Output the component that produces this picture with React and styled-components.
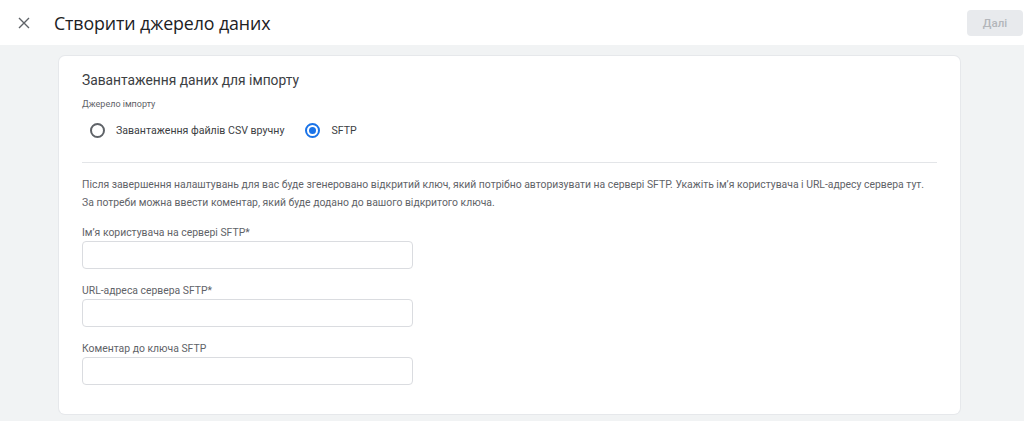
import React from 'react';
import styled, { createGlobalStyle } from 'styled-components';

const GlobalStyle = createGlobalStyle`
    html, body {
        margin: 0;
        padding: 0;
        background: #f1f3f4;
        font-family: Roboto, 'Liberation Sans', sans-serif;
    }
`

const Page = styled.div`
    min-height: 421px;
    display: flex;
    flex-direction: column;
`

const Header = styled.header`
    height: 45px;
    background: #fff;
    display: flex;
    align-items: center;
    padding: 0 1px 0 12px;
    box-sizing: border-box;
`

const CloseButton = styled.button`
    width: 24px;
    height: 24px;
    border: none;
    background: none;
    padding: 0;
    display: flex;
    align-items: center;
    justify-content: center;
    color: #5f6368;
    margin-right: 18px;
`

const Title = styled.h1`
    flex: 1;
    margin: 0;
    font-family: 'Open Sans', Roboto, sans-serif;
    font-weight: 400;
    font-size: 17.8px;
    color: #202124;
    letter-spacing: -0.1px;
`

const NextButton = styled.button`
    width: 56px;
    height: 26px;
    border: none;
    border-radius: 4px;
    background: #e8eaed;
    color: #b3b6ba;
    font-family: Roboto, sans-serif;
    font-weight: 500;
    font-size: 11.5px;
    margin-top: 1px;
`

const Body = styled.main`
    padding: 11px 64px 7px 59px;
`

const Card = styled.section`
    background: #fff;
    border-radius: 6px;
    box-shadow: 0 0 0 1px #e6e8eb;
    padding: 14px 23px 29px 23px;
`

const CardTitle = styled.h2`
    margin: 0;
    font-weight: 400;
    font-size: 13.8px;
    line-height: 20px;
    color: #3c4043;
`

const SmallLabel = styled.div`
    margin-top: 7px;
    font-size: 9px;
    line-height: 14px;
    color: #5f6368;
`

const RadioRow = styled.div`
    display: flex;
    align-items: center;
    height: 20px;
    margin-top: 9px;
    padding-left: 8px;
`

const RadioOption = styled.label`
    display: flex;
    align-items: center;
    font-size: 10.6px;
    color: #3c4043;
    margin-right: 21px;
`

const RadioCircle = styled.span`
    width: 15px;
    height: 15px;
    border-radius: 50%;
    box-sizing: border-box;
    border: 2px solid ${p => (p.$checked ? '#1a73e8' : '#5f6368')};
    display: inline-flex;
    align-items: center;
    justify-content: center;
    margin-right: 11px;

    &::after {
        content: '';
        width: 7px;
        height: 7px;
        border-radius: 50%;
        background: ${p => (p.$checked ? '#1a73e8' : 'transparent')};
    }
`

const Divider = styled.hr`
    border: none;
    border-top: 1px solid #e3e5e8;
    margin: 22px 0 0;
`

const Description = styled.p`
    margin: 13px 0 -1px;
    font-size: 10.4px;
    line-height: 18px;
    color: #5f6368;
`

const Field = styled.div`
    margin-top: 15px;
`

const FieldLabel = styled.div`
    font-size: 10.4px;
    line-height: 14px;
    color: #5f6368;
    margin-bottom: 1px;
`

const Input = styled.input`
    display: block;
    width: 331px;
    height: 28px;
    box-sizing: border-box;
    border: 1px solid #dadce0;
    border-radius: 4px;
    outline: none;
`

function Radio({ checked, children }) {
    return (
        <RadioOption>
            <RadioCircle $checked={checked} />
            {children}
        </RadioOption>
    )
}

export default function App() {
    return (
        <Page>
            <GlobalStyle />
            <Header>
                <CloseButton aria-label="close">
                    <svg width="12" height="12" viewBox="0 0 12 12">
                        <path d="M1 1L11 11M11 1L1 11" stroke="#5f6368" strokeWidth="1.4" />
                    </svg>
                </CloseButton>
                <Title>Створити джерело даних</Title>
                <NextButton disabled>Далі</NextButton>
            </Header>
            <Body>
                <Card>
                    <CardTitle>Завантаження даних для імпорту</CardTitle>
                    <SmallLabel>Джерело імпорту</SmallLabel>
                    <RadioRow>
                        <Radio>Завантаження файлів CSV вручну</Radio>
                        <Radio checked>SFTP</Radio>
                    </RadioRow>
                    <Divider />
                    <Description>
                        Після завершення налаштувань для вас буде згенеровано відкритий ключ, який потрібно авторизувати на сервері SFTP. Укажіть ім’я користувача і URL-адресу сервера тут.
                        <br />
                        За потреби можна ввести коментар, який буде додано до вашого відкритого ключа.
                    </Description>
                    <Field>
                        <FieldLabel>Ім’я користувача на сервері SFTP*</FieldLabel>
                        <Input />
                    </Field>
                    <Field>
                        <FieldLabel>URL-адреса сервера SFTP*</FieldLabel>
                        <Input />
                    </Field>
                    <Field>
                        <FieldLabel>Коментар до ключа SFTP</FieldLabel>
                        <Input />
                    </Field>
                </Card>
            </Body>
        </Page>
    )
}
